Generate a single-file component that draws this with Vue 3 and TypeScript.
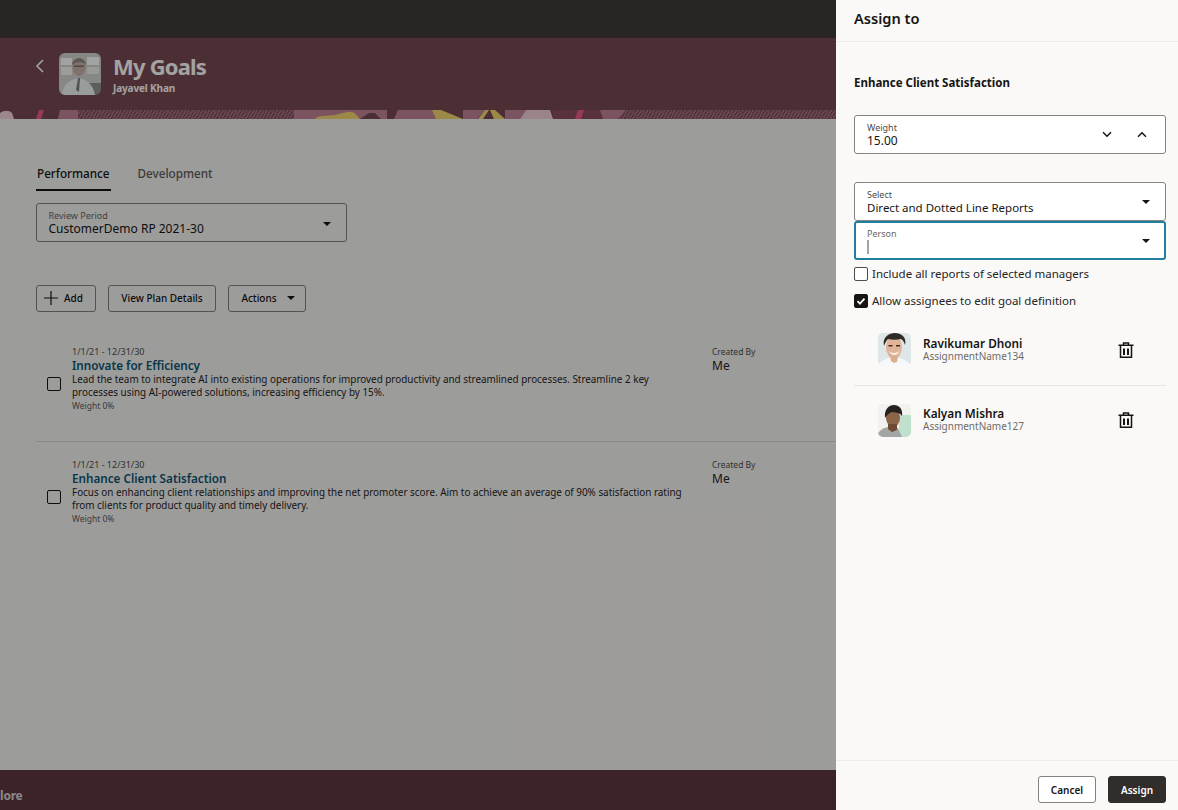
<script setup lang="ts">
interface Goal { title: string; lines: string[] }
const goals: Goal[] = [
  {
    title: 'Innovate for Efficiency',
    lines: [
      'Lead the team to integrate AI into existing operations for improved productivity and streamlined processes. Streamline 2 key',
      'processes using AI-powered solutions, increasing efficiency by 15%.',
    ],
  },
  {
    title: 'Enhance Client Satisfaction',
    lines: [
      'Focus on enhancing client relationships and improving the net promoter score. Aim to achieve an average of 90% satisfaction rating',
      'from clients for product quality and timely delivery.',
    ],
  },
]
const people = [
  { name: 'Ravikumar Dhoni', sub: 'AssignmentName134', variant: 'a' },
  { name: 'Kalyan Mishra', sub: 'AssignmentName127', variant: 'b' },
]
</script>

<template>
  <div class="app">
    <main class="page">
      <div class="topbar"></div>
      <header class="hero">
        <div class="hero-main">
          <svg class="back" viewBox="0 0 10 16" width="10" height="16"><path d="M8 2 2 8l6 6" fill="none" stroke="currentColor" stroke-width="1.6" /></svg>
          <div class="hero-photo">
            <svg viewBox="0 0 42 42" width="42" height="42">
              <rect width="42" height="42" fill="#d4d4d0" />
              <rect x="2" y="5" width="11" height="7" fill="#fff" />
              <rect x="2" y="14" width="11" height="8" fill="#f4f4f2" />
              <rect x="28" y="4" width="12" height="8" fill="#fff" />
              <rect x="28" y="14" width="12" height="7" fill="#f0f0ee" />
              <path d="M30 30h12v12H30z" fill="#8f9492" />
              <path d="M3 42c1-11 8-15 16-17 8 1 15 6 17 17z" fill="#eef5f5" />
              <ellipse cx="20" cy="14" rx="6.500" ry="9" fill="#c9b2a6" />
              <path d="M13 12c0-8 13-10 14 0-3-4-10-4-14 0z" fill="#8f8b88" />
              <path d="M15 12.500h10v1.500H15z" fill="#77716e" />
              <path d="m19 25 2 0 -1 14-3-2z" fill="#7c8280" />
            </svg>
          </div>
          <div class="hero-text">
            <h1>My Goals</h1>
            <div class="hero-sub">Jayavel Khan</div>
          </div>
        </div>
        <div class="strip">
          <svg viewBox="0 0 836 9" width="836" height="9" preserveAspectRatio="none">
            <defs>
              <pattern id="hatch" width="3" height="5" patternUnits="userSpaceOnUse" patternTransform="rotate(28)">
                <rect width="3" height="5" fill="#a06c7b" />
                <rect width="1.200" height="5" fill="#6c3c4a" />
              </pattern>
              <pattern id="hatch2" width="5" height="3" patternUnits="userSpaceOnUse" patternTransform="rotate(-35)">
                <rect width="5" height="1" fill="#c79aa8" opacity="0.35" />
              </pattern>
            </defs>
            <rect width="836" height="9" fill="#784a52" />
            <path d="M0 9V3c4-3 9-3 12 0l2 6z" fill="#f5d3dc" />
            <path d="M39 0h5l-3 9h-5z" fill="#ee5a85" />
            <path d="M60 0h18v9H58z" fill="#c28298" />
            <rect x="78" width="216" height="9" fill="url(#hatch)" />
            <rect x="78" width="216" height="9" fill="url(#hatch2)" />
            <rect x="294" width="93" height="9" fill="#c28298" />
            <path d="M315 9c3-4 12-3 20-4 6-1 12-4 17-3 4 1 6 5 8 7z" fill="#f6d76f" />
            <path d="M360 9l9-6 6 0 6 6z" fill="#784a52" />
            <path d="M398 0h34l5 9h-43z" fill="#c28298" />
            <path d="M432 0h9l22 9h-27z" fill="#f6d76f" />
            <path d="M463 0h22l-8 9h-14z" fill="#c28298" />
            <path d="M478 9l7-9h4l-6 9zM490 0h5l10 9h-11z" fill="#f6d76f" />
            <path d="M505 0h21l-6 9h-15z" fill="#c28298" />
            <path d="M526 0h24l3 9h-33z" fill="#f2ced8" />
            <path d="M553 0h47l3 9h-50z" fill="#8a4e60" />
            <path d="M578 0h6l-3 9h-6z" fill="#ee5a85" />
            <path d="M600 0h26l-8 9h-15z" fill="#c28298" />
            <path d="M626 0h210v9H618z" fill="url(#hatch)" />
            <path d="M626 0h210v9H618z" fill="url(#hatch2)" />
          </svg>
        </div>
      </header>

      <section class="content">
        <nav class="tabs">
          <span class="tab active">Performance</span>
          <span class="tab">Development</span>
        </nav>

        <div class="period">
          <div class="period-text">
            <span class="flabel">Review Period</span>
            <span class="fvalue">CustomerDemo RP 2021-30</span>
          </div>
          <i class="caret"></i>
        </div>

        <div class="toolbar">
          <button class="btn add">
            <svg viewBox="0 0 14 14" width="14" height="14"><path d="M7 0v14M0 7h14" stroke="currentColor" stroke-width="1.2" /></svg>
            Add
          </button>
          <button class="btn plan">View Plan Details</button>
          <button class="btn actions">Actions <i class="caret small"></i></button>
        </div>

        <article v-for="g in goals" :key="g.title" class="goal">
          <span class="box"></span>
          <div class="goal-body">
            <div class="date">1/1/21 - 12/31/30</div>
            <a class="goal-title">{{ g.title }}</a>
            <p class="desc"><span v-for="l in g.lines" :key="l">{{ l }}</span></p>
            <div class="weight">Weight 0%</div>
          </div>
          <div class="created">
            <div class="created-label">Created By</div>
            <div class="created-value">Me</div>
          </div>
        </article>
      </section>

      <footer class="foot"><span>lore</span></footer>
      <div class="scrim"></div>
    </main>

    <aside class="panel">
      <div class="panel-head">Assign to</div>
      <div class="panel-body">
        <h2>Enhance Client Satisfaction</h2>

        <div class="field weightf">
          <div class="field-text">
            <span class="label">Weight</span>
            <span class="value">15.00</span>
          </div>
          <svg class="chev one" viewBox="0 0 10 7" width="10" height="7"><path d="m1 1.200 4 4 4-4" fill="none" stroke="currentColor" stroke-width="1.500" /></svg>
          <svg class="chev" viewBox="0 0 10 7" width="10" height="7"><path d="m1 5.800 4-4 4 4" fill="none" stroke="currentColor" stroke-width="1.500" /></svg>
        </div>

        <div class="field selectf">
          <div class="field-text">
            <span class="label">Select</span>
            <span class="value narrow">Direct and Dotted Line Reports</span>
          </div>
          <i class="caret"></i>
        </div>
        <div class="field personf">
          <div class="field-text">
            <span class="label grey">Person</span>
            <span class="cursor"></span>
          </div>
          <i class="caret"></i>
        </div>

        <label class="check first"><span class="cbox"></span>Include all reports of selected managers</label>
        <label class="check second">
          <span class="cbox on">
            <svg viewBox="0 0 12 12" width="12" height="12"><path d="m2.500 6.200 2.400 2.400 4.600-5" fill="none" stroke="#fff" stroke-width="1.800" /></svg>
          </span>
          Allow assignees to edit goal definition
        </label>

        <ul class="people">
          <li v-for="p in people" :key="p.name" class="person">
            <div class="avatar">
              <svg v-if="p.variant === 'a'" viewBox="0 0 33 33" width="33" height="33">
                <rect width="33" height="33" fill="#dfe6e8" />
                <path d="M0 33c2-6 9-8 16-9 7 1 14 3 17 9z" fill="#f6f8f9" />
                <ellipse cx="16" cy="14" rx="8" ry="11.500" fill="#e0b497" />
                <path d="M12 23h8l-1 6-3 1-3-2z" fill="#dcae90" />
                <path d="M6 13C4 4 11 0 17 0c6 0 12 4 10 12-1-3-2-5-4-6-4 1-9 1-13 0-2 2-3 4-4 7z" fill="#2f2b29" />
                <path d="M11 18c3 3 7 3 10 0-1 5-8 5-10 0z" fill="#fff" />
                <rect x="10.500" y="12" width="4" height="1.500" fill="#3d2d26" />
                <rect x="18" y="12" width="4" height="1.500" fill="#3d2d26" />
              </svg>
              <svg v-else viewBox="0 0 33 33" width="33" height="33">
                <rect width="33" height="33" fill="#f1f1ee" />
                <rect x="21" y="11" width="12" height="22" fill="#bfe0cc" />
                <path d="M0 33v-4c3-4 7-6 11-6l9 1 4 9z" fill="#a4a5a5" />
                <ellipse cx="15" cy="14" rx="7" ry="9" fill="#8c6448" />
                <path d="M10 20h9v6l-5 2-4-3z" fill="#6f4b36" />
                <path d="M7 14C6 5 11 1 16 1c6 0 9 5 8 11-2-3-6-4-10-4-3 1-5 3-7 6z" fill="#24211f" />
              </svg>
            </div>
            <div class="person-text">
              <div class="person-name">{{ p.name }}</div>
              <div class="person-sub">{{ p.sub }}</div>
            </div>
            <svg class="trash" viewBox="0 0 16 16" width="16" height="16">
              <path d="M5.500 3V1h5v2M0.500 3.300h15M2.500 3.500v11.800h11V3.500" fill="none" stroke="#161513" stroke-width="1.500" />
              <path d="M5 6.500h2v6.500H5zM9 6.500h2v6.500H9z" fill="#161513" />
            </svg>
          </li>
        </ul>
      </div>
      <div class="panel-foot">
        <button class="pbtn cancel">Cancel</button>
        <button class="pbtn assign">Assign</button>
      </div>
    </aside>
  </div>
</template>

<style>
html, body { margin: 0; padding: 0; background: #faf9f7; }
</style>

<style scoped>
.app {
  width: 1178px;
  height: 810px;
  display: flex;
  overflow: hidden;
  font-family: "Noto Sans", "Open Sans", "Liberation Sans", sans-serif;
  color: #161513;
}
.page {
  position: relative;
  width: 836px;
  height: 810px;
  flex: none;
  display: flex;
  flex-direction: column;
  background: #f5f4f2;
  overflow: hidden;
}
.scrim {
  position: absolute;
  inset: 0;
  background: rgba(0, 0, 0, 0.36);
}
.topbar { height: 38px; background: #3f3a36; flex: none; }
.hero { height: 81px; flex: none; background: #784a52; display: flex; flex-direction: column; }
.hero-main { height: 72px; display: flex; align-items: center; color: #fff; padding-left: 35px; box-sizing: border-box; }
.back { margin-right: 14px; margin-bottom: 16px; }
.hero-photo { width: 42px; height: 42px; border-radius: 6px; overflow: hidden; margin-right: 12px; margin-top: -1px; }
.hero-photo svg { display: block; filter: blur(0.4px); }
.hero-text { margin-top: -1px; }
h1 { margin: 0; font-size: 22px; line-height: 28px; font-weight: 700; letter-spacing: -0.8px; }
.hero-sub { font-size: 10px; line-height: 14px; font-weight: 700; margin-top: 1px; letter-spacing: -0.15px; }
.strip { height: 9px; }
.strip svg { display: block; }
.content { flex: 1; padding: 45px 0 0 36px; display: flex; flex-direction: column; min-height: 0; }
.tabs { display: flex; gap: 26px; height: 27px; align-items: flex-start; }
.tab { font-size: 11.7px; line-height: 18px; padding: 0 1px; color: #5f5c59; height: 27px; box-sizing: border-box; font-weight: 500; }
.tab.active { color: #161513; border-bottom: 2px solid #161513; }
.period {
  margin-top: 12px;
  width: 311px;
  height: 39px;
  box-sizing: border-box;
  border: 1px solid #85817d;
  border-radius: 3px;
  display: flex;
  align-items: center;
  padding: 2px 15px 0 11.5px;
}
.period-text, .field-text { flex: 1; display: flex; flex-direction: column; }
.flabel { font-size: 9px; line-height: 11px; color: #6b6864; }
.fvalue { font-size: 12px; line-height: 16px; }
.caret { width: 0; height: 0; border-left: 4px solid transparent; border-right: 4px solid transparent; border-top: 4px solid #161513; display: block; }
.caret.small { display: inline-block; margin-left: 10px; vertical-align: 2px; }
.toolbar { display: flex; gap: 12px; margin-top: 43px; }
.btn {
  height: 27px;
  box-sizing: border-box;
  border: 1px solid #85817d;
  border-radius: 3px;
  background: transparent;
  font: 500 10px/1 "Noto Sans", "Open Sans", sans-serif;
  color: #161513;
  display: flex;
  align-items: center;
  padding: 0 0 1px;
  justify-content: center;
}
.add { width: 60px; gap: 6px; justify-content: flex-start; padding-left: 7px; }
.plan { width: 108px; }
.actions { width: 78px; padding-left: 2px; }
.goal {
  display: flex;
  height: 100px;
  width: 800px;
  box-sizing: border-box;
  position: relative;
  padding-left: 36px;
}
.toolbar + .goal { margin-top: 30px; height: 100px; border-bottom: 1px solid #d9d7d3; }
.goal + .goal { padding-top: 13px; }
.box {
  position: absolute;
  left: 11px;
  top: 35px;
  width: 12px;
  height: 12px;
  border: 1px solid #161513;
  border-radius: 2px;
}
.goal + .goal .box { top: 48px; }
.goal-body { width: 640px; flex: none; }
.date { font-size: 9px; line-height: 12px; margin-top: 4px; color: #4f4c49; }
.goal-title { display: block; font-size: 11.7px; line-height: 15px; font-weight: 600; color: #0d5673; }
.desc { margin: 0; font-size: 9.900px; line-height: 12.500px; color: #262422; white-space: nowrap; }
.desc span { display: block; }
.weight { font-size: 8.500px; line-height: 12px; margin-top: 2px; color: #5f5c59; }
.created-label { font-size: 8.500px; line-height: 12px; margin-top: 4px; color: #4f4c49; }
.created-value { font-size: 12px; line-height: 16px; color: #262422; }
.foot { height: 40px; flex: none; background: #5f3843; color: #d9d7d3; font-size: 12px; font-weight: 700; display: flex; align-items: flex-end; box-sizing: border-box; }
.foot span { line-height: 16px; padding-bottom: 6px; letter-spacing: -0.2px; }

.panel {
  width: 342px;
  height: 810px;
  flex: none;
  background: #faf9f7;
  display: flex;
  flex-direction: column;
}
.panel-head { height: 42px; box-sizing: border-box; padding: 9px 0 0 18px; font-size: 14.6px; line-height: 18px; font-weight: 600; border-bottom: 1px solid #efedea; }
.panel-body { flex: 1; padding: 0 12px 0 18px; min-height: 0; }
h2 { margin: 33px 0 0; font-size: 11.500px; line-height: 16px; font-weight: 700; }
.field {
  box-sizing: border-box;
  width: 312px;
  height: 39px;
  border: 1px solid #85817d;
  border-radius: 3px;
  background: #fff;
  display: flex;
  align-items: center;
  padding: 0 15px 0 12px;
}
.label { font-size: 9px; line-height: 11px; color: #4f4c49; }
.label.grey { color: #6b6864; }
.value { font-size: 12px; line-height: 15px; }
.value.narrow { font-size: 11.5px; }
.weightf { margin-top: 24px; padding-right: 18px; }
.chev { color: #161513; display: block; margin-left: 25px; }
.chev.one { margin-left: 0; }
.selectf { margin-top: 28px; }
.personf { margin-top: 0; border: 2px solid #227e9e; padding: 1px 14px 0 11px; }
.cursor { width: 2px; height: 14px; background: #a6a4a1; display: block; margin-top: 1px; }
.check { display: flex; align-items: center; font-size: 11.500px; line-height: 16px; color: #262422; }
.check.first { margin-top: 6px; }
.check.second { margin-top: 11px; }
.cbox { width: 12px; height: 12px; flex: none; border: 1px solid #4f4c49; border-radius: 2px; margin-right: 4px; display: flex; align-items: center; justify-content: center; background: #fff; }
.cbox.on { background: #161513; border-color: #161513; }
.people { list-style: none; margin: 7px 0 0; padding: 0; }
.person { width: 312px; height: 70px; box-sizing: border-box; display: flex; align-items: center; padding: 0 32px 2px 24px; }
.person:first-child { border-bottom: 1px solid #e7e5e1; }
.avatar { width: 33px; height: 33px; border-radius: 5px; overflow: hidden; flex: none; margin-right: 12px; }
.avatar svg { display: block; filter: blur(0.35px); }
.person-text { flex: 1; }
.person-name { font-size: 11.8px; line-height: 13px; font-weight: 600; }
.person-sub { font-size: 10px; line-height: 13px; color: #6f6c68; }
.panel-foot { height: 50px; box-sizing: border-box; border-top: 1px solid #efedea; display: flex; justify-content: flex-end; align-items: flex-start; gap: 12px; padding: 15px 12px 0 0; }
.pbtn { height: 27px; border-radius: 3px; font: 600 10px/1 "Noto Sans", "Open Sans", sans-serif; box-sizing: border-box; padding: 0; }
.cancel { width: 58px; border: 1px solid #85817d; background: #fff; color: #161513; }
.assign { width: 58px; border: 1px solid #312d2a; background: #312d2a; color: #fff; }
</style>
